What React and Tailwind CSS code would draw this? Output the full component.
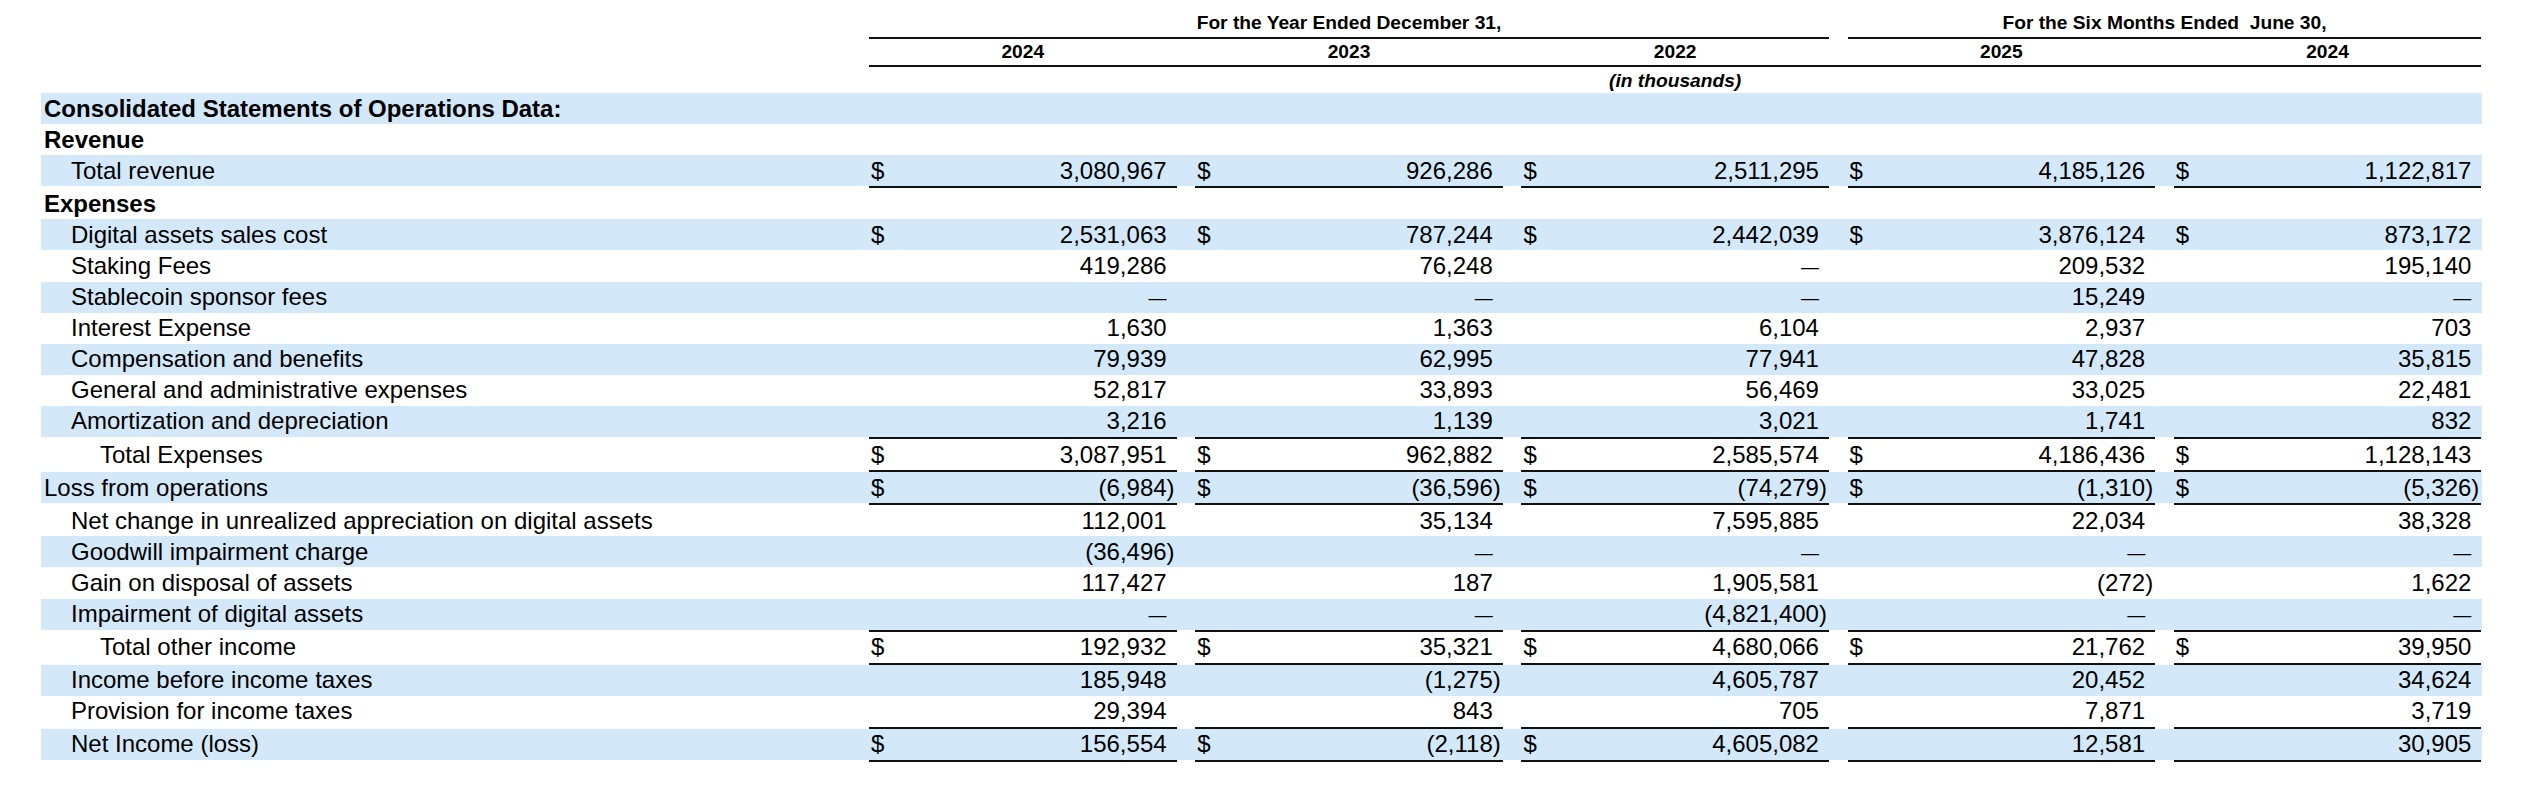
const rows = [
  { label: "Consolidated Statements of Operations Data:", level: 0, bold: true },
  { label: "Revenue", level: 0, bold: true },
  {
    label: "Total revenue",
    level: 1,
    dollar: 5,
    values: ["3,080,967", "926,286", "2,511,295", "4,185,126", "1,122,817"],
    line: true,
  },
  { label: "Expenses", level: 0, bold: true },
  {
    label: "Digital assets sales cost",
    level: 1,
    dollar: 5,
    values: ["2,531,063", "787,244", "2,442,039", "3,876,124", "873,172"],
  },
  {
    label: "Staking Fees",
    level: 1,
    values: ["419,286", "76,248", "—", "209,532", "195,140"],
  },
  {
    label: "Stablecoin sponsor fees",
    level: 1,
    values: ["—", "—", "—", "15,249", "—"],
  },
  {
    label: "Interest Expense",
    level: 1,
    values: ["1,630", "1,363", "6,104", "2,937", "703"],
  },
  {
    label: "Compensation and benefits",
    level: 1,
    values: ["79,939", "62,995", "77,941", "47,828", "35,815"],
  },
  {
    label: "General and administrative expenses",
    level: 1,
    values: ["52,817", "33,893", "56,469", "33,025", "22,481"],
  },
  {
    label: "Amortization and depreciation",
    level: 1,
    values: ["3,216", "1,139", "3,021", "1,741", "832"],
    line: true,
  },
  {
    label: "Total Expenses",
    level: 2,
    dollar: 5,
    values: ["3,087,951", "962,882", "2,585,574", "4,186,436", "1,128,143"],
    line: true,
  },
  {
    label: "Loss from operations",
    level: 0,
    dollar: 5,
    values: ["(6,984)", "(36,596)", "(74,279)", "(1,310)", "(5,326)"],
    line: true,
  },
  {
    label: "Net change in unrealized appreciation on digital assets",
    level: 1,
    values: ["112,001", "35,134", "7,595,885", "22,034", "38,328"],
  },
  {
    label: "Goodwill impairment charge",
    level: 1,
    values: ["(36,496)", "—", "—", "—", "—"],
  },
  {
    label: "Gain on disposal of assets",
    level: 1,
    values: ["117,427", "187", "1,905,581", "(272)", "1,622"],
  },
  {
    label: "Impairment of digital assets",
    level: 1,
    values: ["—", "—", "(4,821,400)", "—", "—"],
    line: true,
  },
  {
    label: "Total other income",
    level: 2,
    dollar: 5,
    values: ["192,932", "35,321", "4,680,066", "21,762", "39,950"],
    line: true,
  },
  {
    label: "Income before income taxes",
    level: 1,
    values: ["185,948", "(1,275)", "4,605,787", "20,452", "34,624"],
  },
  {
    label: "Provision for income taxes",
    level: 1,
    values: ["29,394", "843", "705", "7,871", "3,719"],
    line: true,
  },
  {
    label: "Net Income (loss)",
    level: 1,
    dollar: 3,
    values: ["156,554", "(2,118)", "4,605,082", "12,581", "30,905"],
    line: true,
  },
];

const indent = ["pl-[3px]", "pl-[30px]", "pl-[59px]"];

function Cell({ value, dollar }) {
  let num = value;
  let paren = "";
  if (value && value.endsWith(")")) {
    num = value.slice(0, -1);
    paren = ")";
  }
  return (
    <div className="flex w-[307.6px] shrink-0 items-center">
      <span className="w-[24px] shrink-0 pl-[2px]">{dollar ? "$" : ""}</span>
      <span className="flex-1 text-right">
        {num === "—" ? <span className="text-[18px]">—</span> : num}
      </span>
      <span className="w-[8px] shrink-0">{paren}</span>
      <span className="w-[2px] shrink-0" />
    </div>
  );
}

function Line() {
  return (
    <div className="flex h-[2px]">
      <div className="w-[828px] shrink-0" />
      <div className="flex gap-x-[18.6px]">
        {[0, 1, 2, 3, 4].map((i) => (
          <div key={i} className="h-[2px] w-[307.6px] bg-[#111]" />
        ))}
      </div>
    </div>
  );
}

function Row({ row, band }) {
  return (
    <>
      <div className={`flex h-[31.1px] items-center ${band ? "bg-[#d3e9f9]" : ""}`}>
        <div
          className={`w-[828px] shrink-0 ${indent[row.level]} ${
            row.bold ? "font-bold" : ""
          }`}
        >
          {row.label}
        </div>
        {row.values && (
          <div className="flex gap-x-[18.6px]">
            {row.values.map((v, i) => (
              <Cell key={i} value={v} dollar={row.dollar && i < row.dollar} />
            ))}
          </div>
        )}
      </div>
      {row.line && <Line />}
    </>
  );
}

export default function App() {
  return (
    <div
      className="min-h-[787px] w-[2527px] bg-white pl-[41px] text-[24px] leading-[28px] text-black"
      style={{ fontFamily: '"Liberation Sans", Arial, sans-serif' }}
    >
      <div className="w-[2441px]">
        {/* column headers */}
        <div className="flex h-[37px] pt-[12px] text-[19.2px] font-bold leading-[22px]">
          <div className="w-[828px] shrink-0" />
          <div className="w-[960px] shrink-0 text-center">
            For the Year Ended December 31,
          </div>
          <div className="w-[18.6px] shrink-0" />
          <div className="w-[633.8px] shrink-0 whitespace-pre text-center">
            For the Six Months Ended  June 30,
          </div>
        </div>
        <div className="flex h-[2px]">
          <div className="w-[828px] shrink-0" />
          <div className="w-[960px] shrink-0 bg-[#111]" />
          <div className="w-[18.6px] shrink-0" />
          <div className="w-[633.8px] shrink-0 bg-[#111]" />
        </div>
        <div className="flex h-[26px] pt-[1.5px] text-[19.2px] font-bold leading-[22px]">
          <div className="w-[828px] shrink-0" />
          <div className="flex gap-x-[18.6px]">
            {["2024", "2023", "2022", "2025", "2024"].map((y, i) => (
              <div key={i} className="w-[307.6px] text-center">
                {y}
              </div>
            ))}
          </div>
        </div>
        <div className="flex h-[2px]">
          <div className="w-[828px] shrink-0" />
          <div className="w-[1612.4px] shrink-0 bg-[#111]" />
        </div>
        <div className="flex h-[26px] pt-[3px] text-[19.2px] font-bold italic leading-[22px]">
          <div className="w-[828px] shrink-0" />
          <div className="w-[652.4px] shrink-0" />
          <div className="w-[307.6px] shrink-0 text-center">(in thousands)</div>
        </div>

        {/* statement rows */}
        {rows.map((row, i) => (
          <Row key={i} row={row} band={i % 2 === 0} />
        ))}
      </div>
    </div>
  );
}
